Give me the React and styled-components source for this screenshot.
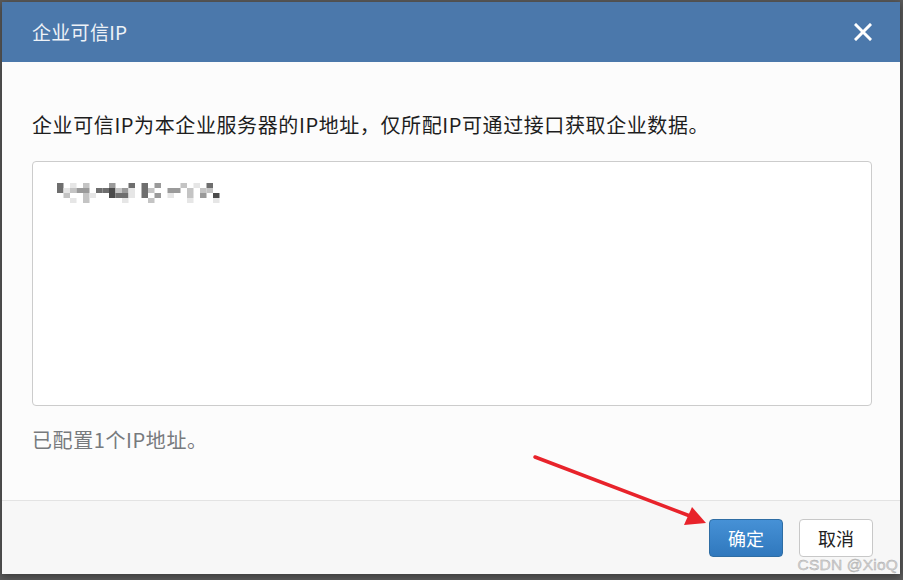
import React from "react";
import styled, { createGlobalStyle } from "styled-components";

const Global = createGlobalStyle`
  html, body { margin: 0; padding: 0; }
  body {
    background: #5a5a5a;
    font-family: "Noto Sans CJK SC", "Noto Sans", sans-serif;
    width: 903px;
    height: 580px;
    overflow: hidden;
  }
`;

const Stage = styled.div`
  position: relative;
  width: 903px;
  height: 580px;
  padding: 2px 3px 6px 2px;
  box-sizing: border-box;
`;

const Dialog = styled.div`
  display: flex;
  flex-direction: column;
  width: 898px;
  height: 572px;
  background: #fcfcfc;
  box-shadow: 0 2px 8px rgba(0, 0, 0, 0.4);
`;

const Header = styled.div`
  display: flex;
  align-items: center;
  justify-content: space-between;
  height: 60px;
  padding: 0 27px 0 30px;
  background: #4b78ab;
  flex-shrink: 0;
`;

const Title = styled.h3`
  margin: 0;
  font-size: 19px;
  font-weight: 400;
  color: #eef2f7;
  line-height: 24px;
  letter-spacing: 0.3px;
`;

const Close = styled.button`
  display: flex;
  align-items: center;
  justify-content: center;
  width: 20px;
  height: 20px;
  padding: 0;
  border: 0;
  background: transparent;
  cursor: pointer;
`;

const Body = styled.div`
  flex: 1;
  display: flex;
  flex-direction: column;
  padding: 51px 28px 0 30px;
`;

const Intro = styled.p`
  margin: 0;
  font-size: 20px;
  letter-spacing: 0.6px;
  line-height: 24px;
  color: #1e1e1e;
`;

const IpBox = styled.div`
  box-sizing: border-box;
  margin-top: 24px;
  height: 245px;
  border: 1px solid #cccccc;
  border-radius: 4px;
  background: #ffffff;
  padding: 21px 0 0 24px;
`;

const Status = styled.p`
  margin: 22px 0 0;
  font-size: 20px;
  letter-spacing: 0.6px;
  line-height: 24px;
  color: #777a7d;
`;

const Footer = styled.div`
  display: flex;
  justify-content: flex-end;
  gap: 16px;
  height: 74px;
  padding: 18px 27px 0 0;
  box-sizing: border-box;
  border-top: 1px solid #e3e3e3;
  background: #f7f7f7;
  flex-shrink: 0;
`;

const Button = styled.button`
  width: 74px;
  height: 38px;
  border-radius: 4px;
  font-family: "Noto Sans CJK SC", sans-serif;
  font-size: 18px;
  cursor: pointer;
  border: 1px solid ${(p) => (p.$primary ? "#2e6da4" : "#c8c8c8")};
  color: ${(p) => (p.$primary ? "#ffffff" : "#222222")};
  background: ${(p) =>
    p.$primary
      ? "linear-gradient(to bottom, #4691d6 0%, #3078bd 100%)"
      : "#ffffff"};
`;

const Arrow = styled.svg`
  position: absolute;
  left: 0;
  top: 0;
  pointer-events: none;
`;

const Watermark = styled.div`
  position: absolute;
  right: 5px;
  bottom: 6px;
  font-family: "Liberation Sans", Arial, sans-serif;
  font-size: 15.5px;
  color: #d4d4d4;
  -webkit-text-stroke: 0.4px #a8a8a8;
  letter-spacing: 0.2px;
`;

const rows = [
  "4 1 2   3  4 4 3   2 1 4 ",
  "41233 445231 42  33 2 22 ",
  " 2  21  5441 4 3 1  2 3 5",
  "  1 2     1   2     1   1",
];
const shades = { "1": "#e6e6e6", "2": "#c4c4c4", "3": "#9a9a9a", "4": "#6e6e6e", "5": "#4a4a4a" };

function Pixelated() {
  const cells = [];
  rows.forEach((r, y) => {
    r.split("").forEach((c, x) => {
      if (shades[c]) {
        cells.push(
          <rect key={`${x}-${y}`} x={x * 6.5} y={y * 5} width={6.5} height={5} fill={shades[c]} />
        );
      }
    });
  });
  return (
    <svg width="165" height="20" viewBox="0 0 165 20">
      {cells}
    </svg>
  );
}

export default function App() {
  return (
    <>
      <Global />
      <Stage>
        <Dialog>
          <Header>
            <Title>企业可信IP</Title>
            <Close aria-label="close">
              <svg width="18" height="18" viewBox="0 0 18 18">
                <path d="M2 2 L16 16 M16 2 L2 16" stroke="#ffffff" strokeWidth="3" strokeLinecap="square" />
              </svg>
            </Close>
          </Header>
          <Body>
            <Intro>企业可信IP为本企业服务器的IP地址，仅所配IP可通过接口获取企业数据。</Intro>
            <IpBox>
              <Pixelated />
            </IpBox>
            <Status>已配置1个IP地址。</Status>
          </Body>
          <Footer>
            <Button $primary>确定</Button>
            <Button>取消</Button>
          </Footer>
        </Dialog>
        <Arrow width="903" height="580" viewBox="0 0 903 580">
          <line x1="535" y1="457" x2="690" y2="516" stroke="#e8232b" strokeWidth="3.5" strokeLinecap="round" />
          <polygon points="706,523 684,525 692,507" fill="#e8232b" />
        </Arrow>
        <Watermark>CSDN @XioQ</Watermark>
      </Stage>
    </>
  );
}
